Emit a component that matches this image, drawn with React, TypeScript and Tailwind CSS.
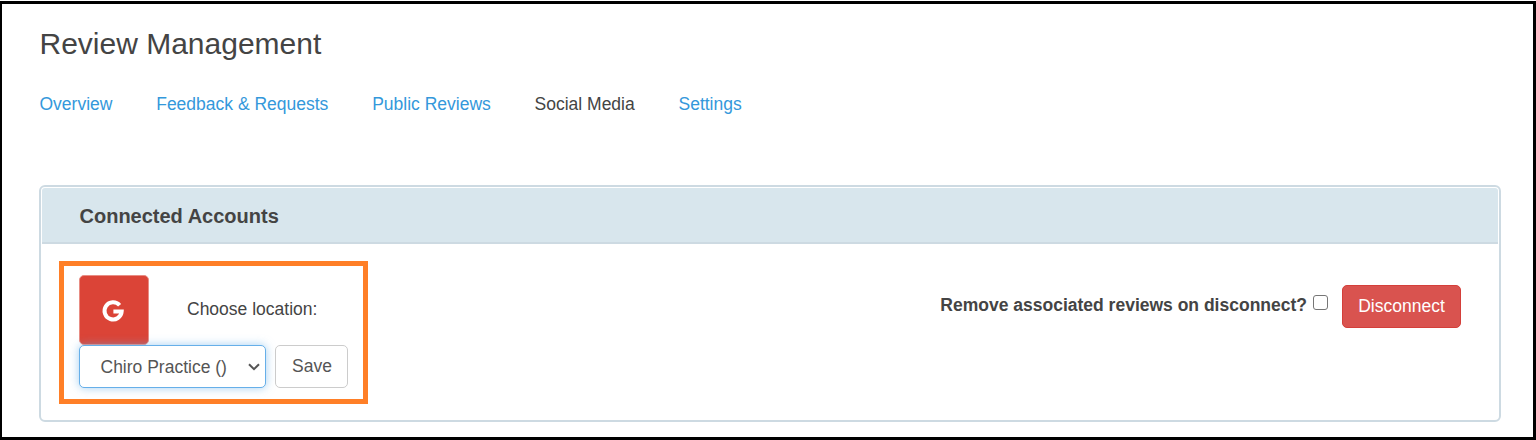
import React from "react";

const tabs = [
  { label: "Overview" },
  { label: "Feedback & Requests" },
  { label: "Public Reviews" },
  { label: "Social Media", active: true },
  { label: "Settings" },
];

function Tabs() {
  return (
    <nav className="mt-[30px] flex gap-[43.75px] pl-[0.5px] leading-[25px]">
      {tabs.map((tab) => (
        <a key={tab.label} className={tab.active ? "text-[#444444]" : "text-[#3498db]"}>
          {tab.label}
        </a>
      ))}
    </nav>
  );
}

function GoogleTile() {
  return (
    <div className="flex size-[70px] shrink-0 items-center justify-center rounded-[5px] border border-[#e88d84] bg-[#db4437]">
      <svg width="24" height="24" viewBox="0 0 24 24" fill="none" stroke="#ffffff" strokeWidth="4" className="relative -left-px top-px">
        <path d="M18.6 6.2A8.6 8.6 0 1 0 20.7 12.4H12.4" />
      </svg>
    </div>
  );
}

function LocationPicker() {
  return (
    <section className="h-[143px] w-[309px] shrink-0 border-[5px] border-[#ff7f27] pl-[15px] pt-[9px]">
      <div className="flex items-center">
        <GoogleTile />
        <span className="ml-[38px] mt-[-1px]">Choose location:</span>
      </div>
      <div className="flex">
        <button className="flex h-[43px] w-[187px] items-center rounded-[5px] border border-[#66afe9] bg-white pl-[20.5px] text-[#555555] shadow-[0_0_10px_rgba(102,175,233,0.6)]">
          <span className="mt-px">Chiro Practice ()</span>
          <svg width="12" height="8" viewBox="0 0 12 8" fill="none" stroke="#555555" strokeWidth="2" className="ml-auto mr-[5px]">
            <path d="M1 1.2 6 6.2l5-5" />
          </svg>
        </button>
        <button className="ml-[9px] flex h-[43px] w-[73px] items-center justify-center rounded-[5px] border border-[#cccccc] bg-white pb-px pl-px text-[#555555]">
          Save
        </button>
      </div>
    </section>
  );
}

export default function App() {
  return (
    <div className="h-[440px] w-[1536px] bg-white pt-px font-['Liberation_Sans',Arial,sans-serif] text-[17.5px] text-[#444444]">
      <main className="h-[439px] border-y-[3px] border-l-2 border-r-[3px] border-black pl-[37px] pr-[32px] pt-[22px]">
        <h1 className="pl-[0.5px] text-[30px] leading-[36px]">Review Management</h1>
        <Tabs />
        <section className="mt-[68px] h-[237px] rounded-[6px] border-2 border-[#cddae2] p-px">
          <h2 className="h-[56px] rounded-t-[3px] border-b-2 border-[#cddae2] bg-[#d8e6ed] pl-[37.5px] text-[20px] font-bold leading-[56px]">
            Connected Accounts
          </h2>
          <div className="flex items-start pl-[17px] pr-[37px] pt-[17px]">
            <LocationPicker />
            <div className="ml-auto mt-[24px] flex items-start">
              <label className="flex">
                <span className="mt-[8px] font-bold leading-[25px]">Remove associated reviews on disconnect?</span>
                <span className="ml-[6px] mt-[10px] size-[15px] rounded-[3px] border border-[#767676] bg-white" />
              </label>
              <button className="ml-[14px] flex h-[43px] w-[119px] items-center justify-center rounded-[5px] border border-[#d43f3a] bg-[#d9534f] text-white">
                Disconnect
              </button>
            </div>
          </div>
        </section>
      </main>
    </div>
  );
}
